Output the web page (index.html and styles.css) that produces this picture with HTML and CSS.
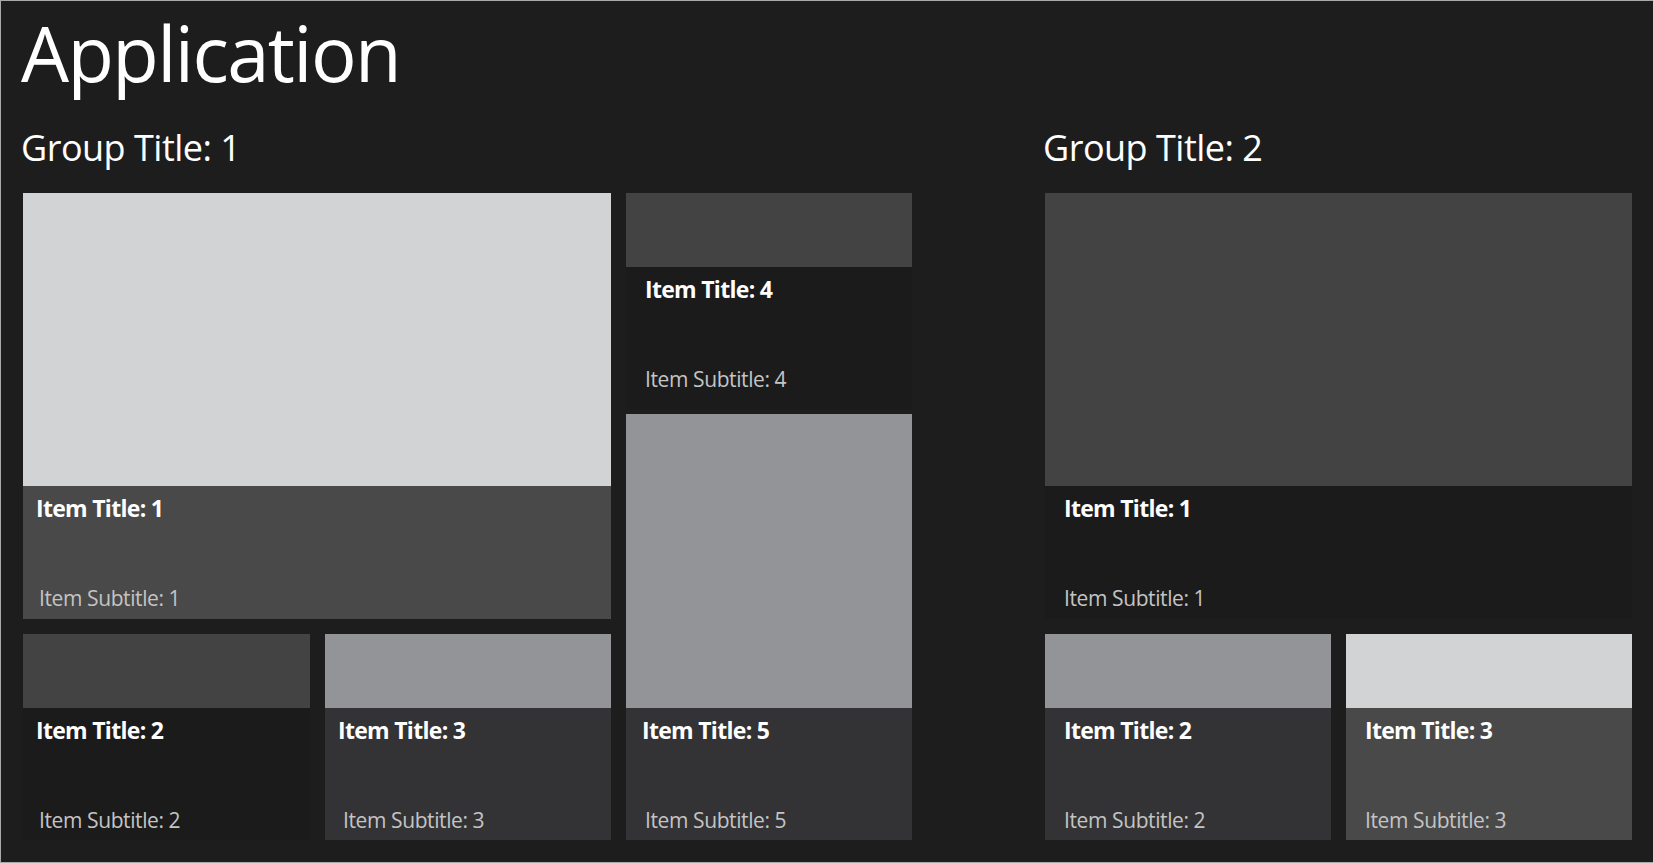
FILE: index.html
```html
<!DOCTYPE html>
<html lang="en">
<head>
<meta charset="utf-8">
<title>Application</title>
<link rel="stylesheet" href="styles.css">
</head>
<body>
<div class="page">
  <h1 class="app-title">Application</h1>
  <div class="groups">
    <section class="group group-one">
      <h2 class="group-title">Group Title: 1</h2>
      <div class="group-body">
        <div class="grid-two">
          <article class="tile tile-big span-2">
            <div class="tile-img img-light img-big"></div>
            <div class="tile-text panel-grey inset-a">
              <div class="item-title">Item Title: 1</div>
              <div class="item-sub">Item Subtitle: 1</div>
            </div>
          </article>
          <article class="tile tile-small">
            <div class="tile-img img-dark"></div>
            <div class="tile-text panel-black inset-a">
              <div class="item-title">Item Title: 2</div>
              <div class="item-sub">Item Subtitle: 2</div>
            </div>
          </article>
          <article class="tile tile-small">
            <div class="tile-img img-mid"></div>
            <div class="tile-text panel-mid inset-b">
              <div class="item-title">Item Title: 3</div>
              <div class="item-sub">Item Subtitle: 3</div>
            </div>
          </article>
        </div>
        <div class="col-three">
          <article class="tile tile-four">
            <div class="tile-img img-dark"></div>
            <div class="tile-text panel-black inset-c">
              <div class="item-title">Item Title: 4</div>
              <div class="item-sub">Item Subtitle: 4</div>
            </div>
          </article>
          <article class="tile tile-tall">
            <div class="tile-img img-mid img-tall"></div>
            <div class="tile-text panel-mid inset-d">
              <div class="item-title">Item Title: 5</div>
              <div class="item-sub">Item Subtitle: 5</div>
            </div>
          </article>
        </div>
      </div>
    </section>
    <section class="group group-two">
      <h2 class="group-title">Group Title: 2</h2>
      <div class="grid-two grid-two-b">
        <article class="tile tile-big span-2">
          <div class="tile-img img-dark img-big"></div>
          <div class="tile-text panel-black inset-c">
            <div class="item-title">Item Title: 1</div>
            <div class="item-sub">Item Subtitle: 1</div>
          </div>
        </article>
        <article class="tile tile-small">
          <div class="tile-img img-mid"></div>
          <div class="tile-text panel-mid inset-c">
            <div class="item-title">Item Title: 2</div>
            <div class="item-sub">Item Subtitle: 2</div>
          </div>
        </article>
        <article class="tile tile-small">
          <div class="tile-img img-light"></div>
          <div class="tile-text panel-grey inset-c">
            <div class="item-title">Item Title: 3</div>
            <div class="item-sub">Item Subtitle: 3</div>
          </div>
        </article>
      </div>
    </section>
  </div>
</div>
</body>
</html>
```

FILE: styles.css
```css
* { box-sizing: border-box; }

html, body {
  margin: 0;
  padding: 0;
  background: #1d1d1d;
}

body {
  font-family: "Open Sans", "Noto Sans", sans-serif;
  color: #ffffff;
}

.page {
  width: 1653px;
  height: 863px;
  border: 1px solid #a9a9a9;
  border-right: none;
  background-color: #1d1d1d;
  overflow: hidden;
}

.app-title {
  margin: 14px 0 0 20px;
  font-size: 76px;
  line-height: 76px;
  font-weight: 400;
  letter-spacing: -1.6px;
  height: 76px;
}

.groups {
  display: flex;
  gap: 133px;
  margin-top: 37px;
  padding-left: 22px;
}

.group-title {
  margin: 0 0 25px -2px;
  font-size: 36px;
  line-height: 40px;
  font-weight: 400;
  letter-spacing: -0.5px;
  height: 40px;
}

.group-body {
  display: flex;
  gap: 15px;
}

.grid-two {
  display: grid;
  grid-template-columns: 287px 286px;
  grid-template-rows: 426px 206px;
  gap: 15px;
}

.grid-two-b {
  grid-template-columns: 286px 286px;
}

.span-2 { grid-column: span 2; }

.col-three {
  display: flex;
  flex-direction: column;
  gap: 5px;
  width: 286px;
}

.tile {
  display: flex;
  flex-direction: column;
}

.tile-four { height: 216px; }
.tile-tall { height: 426px; }

.tile-img {
  height: 74px;
  flex: none;
}

.img-big { height: 293px; }
.img-tall { height: 294px; }

.img-light { background: #d2d3d5; }
.img-mid { background: #939497; }
.img-dark { background: #434343; }

.tile-text {
  flex: 1;
  padding-top: 7px;
}

.panel-grey { background: #494949; }
.panel-mid { background: #333335; }
.panel-black { background: #1b1b1b; }

.item-title {
  font-size: 23px;
  line-height: 30px;
  font-weight: 700;
  letter-spacing: -0.7px;
  color: #ffffff;
}

.item-sub {
  margin-top: 62px;
  font-size: 21px;
  line-height: 26px;
  font-weight: 400;
  letter-spacing: -0.4px;
  color: #c4c4c4;
}

.inset-a .item-title { padding-left: 13px; }
.inset-a .item-sub { padding-left: 16px; }
.inset-b .item-title { padding-left: 13px; }
.inset-b .item-sub { padding-left: 18px; }
.inset-c .item-title,
.inset-c .item-sub { padding-left: 19px; }
.inset-d .item-title { padding-left: 16px; }
.inset-d .item-sub { padding-left: 19px; }
```
